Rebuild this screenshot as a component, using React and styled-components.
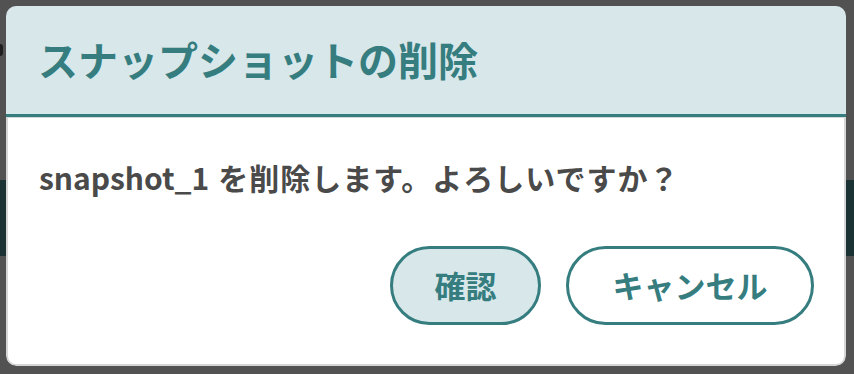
import React from "react";
import styled, { createGlobalStyle } from "styled-components";

const GlobalStyle = createGlobalStyle`
  html, body {
    margin: 0;
    padding: 0;
    background: #525252;
  }
  body {
    font-family: "Noto Sans CJK JP", "Noto Sans", sans-serif;
  }
  * { box-sizing: border-box; }
`;

const Page = styled.div`
  position: relative;
  width: 854px;
  height: 374px;
  overflow: hidden;
  background: #525252;
`;

const BehindHeader = styled.div`
  height: 180px;
  padding-top: 44px;
`;

const BehindMark = styled.div`
  width: 3px;
  height: 12px;
  border-radius: 0 3px 3px 0;
  background: #1f1f1f;
`;

const BehindBand = styled.div`
  height: 76px;
  background: #1b3235;
`;

const Dialog = styled.div`
  position: absolute;
  top: 6px;
  left: 6px;
  width: 840px;
  border-radius: 10px;
  overflow: hidden;
  display: flex;
  flex-direction: column;
`;

const Header = styled.div`
  height: 111px;
  background: #d8e7ea;
  border-bottom: 3px solid #357d7f;
  display: flex;
  align-items: center;
  padding: 0 0 2px 32px;
`;

const Title = styled.h2`
  margin: 0;
  font-size: 40px;
  line-height: 48px;
  font-weight: 600;
  color: #357d7f;
`;

const Body = styled.div`
  background: #ffffff;
  border: 2px solid #d6d6d6;
  border-top-width: 1px;
  border-radius: 0 0 10px 10px;
  padding: 37px 30px 39px 31px;
  display: flex;
  flex-direction: column;
`;

const Message = styled.p`
  margin: 0;
  font-size: 30px;
  line-height: 44px;
  font-weight: 700;
  color: #4a4a4a;
  white-space: nowrap;
`;

const Question = styled.span`
  margin-left: 9px;
  letter-spacing: 1px;
`;

const Actions = styled.div`
  display: flex;
  justify-content: flex-end;
  gap: 25px;
  margin-top: 47px;
`;

const Button = styled.button`
  width: ${(p) => p.$width}px;
  height: 79px;
  border: 3px solid #357d7f;
  border-radius: 40px;
  background: ${(p) => (p.$primary ? "#d8e7ea" : "#ffffff")};
  color: #357d7f;
  font-family: "Noto Sans CJK JP", "Noto Sans", sans-serif;
  font-size: 31px;
  font-weight: 700;
  padding: 0 0 2px;
  cursor: pointer;
`;

export default function App() {
  return (
    <>
      <GlobalStyle />
      <Page>
        <BehindHeader>
          <BehindMark />
        </BehindHeader>
        <BehindBand />
        <Dialog role="dialog" aria-labelledby="dlg-title">
          <Header>
            <Title id="dlg-title">スナップショットの削除</Title>
          </Header>
          <Body>
            <Message>
              snapshot_1<Question>を削除します。よろしいですか？</Question>
            </Message>
            <Actions>
              <Button $primary $width={151}>確認</Button>
              <Button $width={248}>キャンセル</Button>
            </Actions>
          </Body>
        </Dialog>
      </Page>
    </>
  );
}
